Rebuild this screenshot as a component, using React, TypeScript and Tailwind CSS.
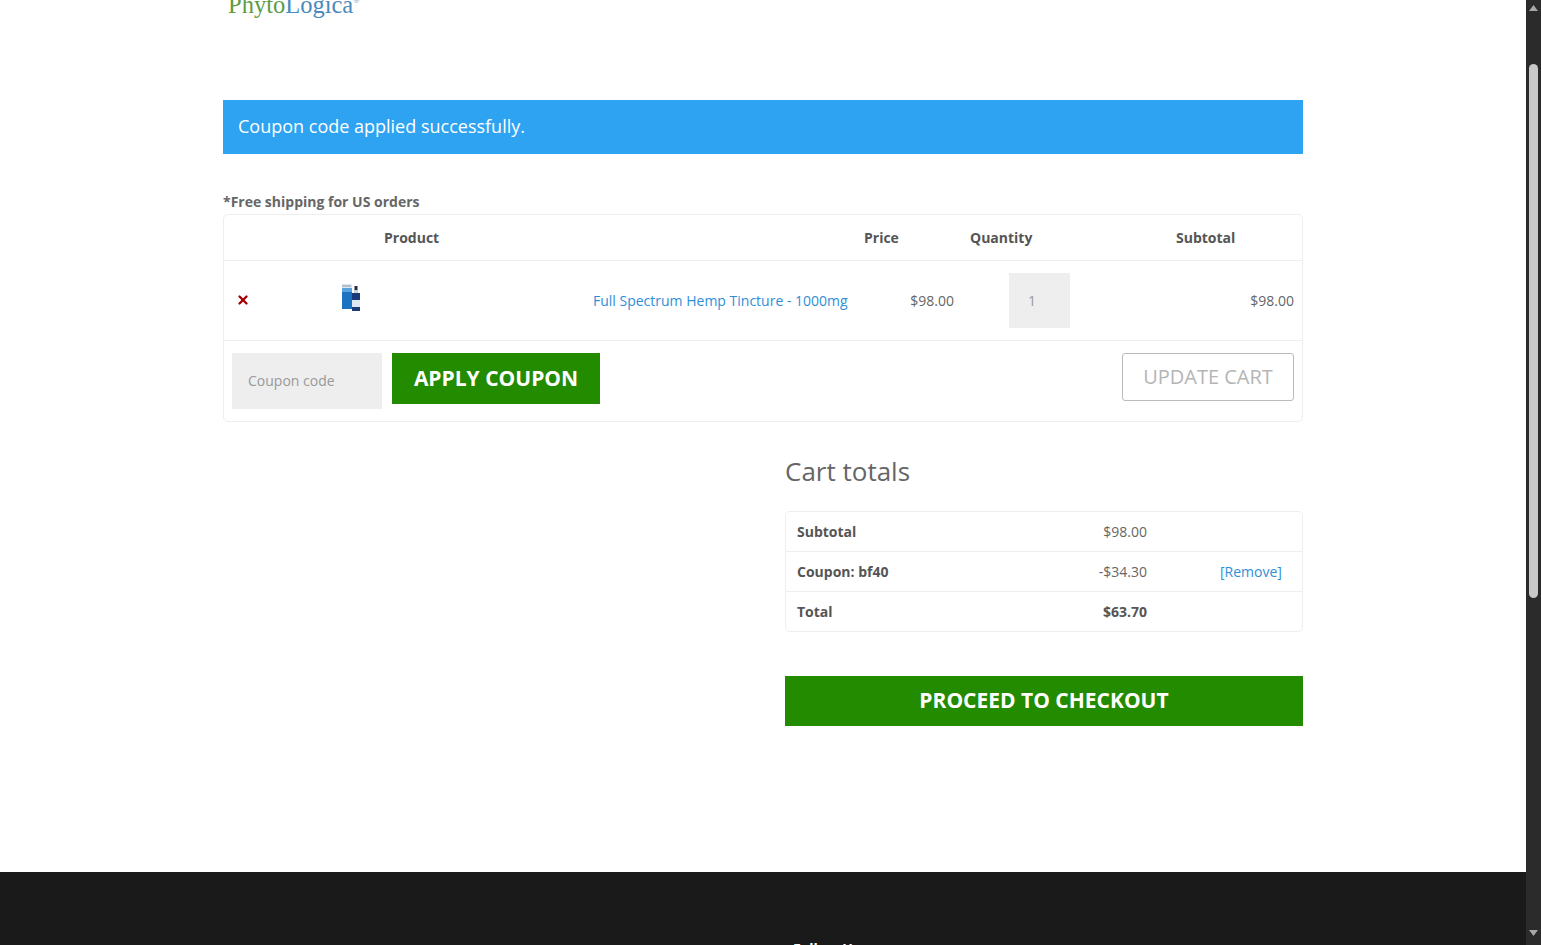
import { X } from "lucide-react";

function BottleIcon() {
  return (
    <svg width="20" height="30" viewBox="0 0 20 30" className="block">
      {/* carton */}
      <rect x="1" y="1" width="10" height="25" fill="#dfe8f0" />
      <rect x="1" y="2" width="9" height="2" fill="#aebfce" />
      <rect x="1" y="5" width="10" height="4" fill="#5aa2dc" />
      <rect x="1" y="9" width="10" height="17" fill="#1a72c0" />
      {/* bottle */}
      <rect x="13.5" y="3" width="3" height="4" fill="#222c44" />
      <rect x="13" y="7" width="4" height="3" fill="#c9d3e0" />
      <rect x="11" y="10" width="8" height="7" fill="#1c3a78" />
      <rect x="11" y="17" width="8" height="7" fill="#dce7f3" />
      <rect x="11" y="24" width="8" height="4" fill="#1c3a78" />
    </svg>
  );
}

function TotalsRow({ label, value, bold, action }: { label: string; value: string; bold?: boolean; action?: string }) {
  return (
    <div className="flex h-10 items-center border-b border-[#eeeeee] pl-[11px] text-sm last:h-[39px] last:border-b-0">
      <span className="w-[260px] font-bold text-[#555]">{label}</span>
      <span className={`w-[90px] text-right ${bold ? "font-bold text-[#555]" : "text-[#666]"}`}>{value}</span>
      {action ? <a className="ml-[73px] text-[#2e8fd8]">{action}</a> : null}
    </div>
  );
}

export default function App() {
  return (
    <div className="flex h-[945px] overflow-hidden bg-white font-['Open_Sans',sans-serif] text-sm text-[#666]">
      <div className="flex min-w-0 flex-1 flex-col">
        <main className="mx-auto h-[872px] w-[1080px] shrink-0">
          <div className="flex h-[19px] items-end overflow-hidden pb-px pl-[5px] font-['Liberation_Serif',serif] text-[24.5px] leading-[26px]">
            <span className="text-[#5c9c44]">Phyto</span>
            <span className="text-[#4a8abd]">Logica</span>
            <span className="mb-[13px] text-[8px] leading-none text-[#4a8abd]">®</span>
          </div>

          <div className="mt-[81px] flex h-[54px] items-center bg-[#2ea3f2] px-[15px] pb-[2px] text-lg text-white">
            Coupon code applied successfully.
          </div>

          <p className="mt-[37px] h-[23px] font-bold leading-[21px] text-[#666]">*Free shipping for US orders</p>

          <div className="rounded-[5px] border border-[#eeeeee]">
            <div className="flex h-[46px] items-center border-b border-[#eeeeee] font-bold text-[#555]">
              <span className="ml-[160px] w-[480px]">Product</span>
              <span className="w-[106px]">Price</span>
              <span className="w-[206px]">Quantity</span>
              <span>Subtotal</span>
            </div>

            <div className="flex h-[80px] items-center border-b border-[#eeeeee]">
              <X className="ml-[12px] -mt-px h-[14px] w-[14px] text-[#a80000]" strokeWidth={4} />
              <div className="-mt-[5px] ml-[91px]">
                <BottleIcon />
              </div>
              <a className="ml-[232px] w-[254px] whitespace-nowrap text-[#2e8fd8]">Full Spectrum Hemp Tincture - 1000mg</a>
              <span className="w-[107px] text-right">$98.00</span>
              <div className="ml-[55px] flex h-[55px] w-[61px] items-center bg-[#eeeeee] pl-[19px] text-[#999]">1</div>
              <span className="ml-auto pr-2">$98.00</span>
            </div>

            <div className="flex h-[80px] items-start px-2 pt-3">
              <div className="flex h-14 w-[150px] items-center bg-[#eeeeee] pl-4 text-[#999]">Coupon code</div>
              <button className="ml-[10px] h-[51px] w-[208px] bg-[#228b00] pb-[2px] text-[21px] font-bold text-white">APPLY COUPON</button>
              <button className="ml-auto h-12 w-[172px] rounded-[3px] border border-[#bbbbbb] text-xl text-[#b5b5b5]">UPDATE CART</button>
            </div>
          </div>

          <div className="ml-auto mt-[30px] w-[518px]">
            <h2 className="h-[40px] text-[26px] leading-[38px] text-[#666]">Cart totals</h2>
            <div className="mt-[19px] rounded-[5px] border border-[#eeeeee]">
              <TotalsRow label="Subtotal" value="$98.00" />
              <TotalsRow label="Coupon: bf40" value="-$34.30" action="[Remove]" />
              <TotalsRow label="Total" value="$63.70" bold />
            </div>
            <button className="mt-11 h-[50px] w-full bg-[#228b00] pb-[2px] text-[21px] font-bold text-white">PROCEED TO CHECKOUT</button>
          </div>
        </main>

        <footer className="h-[73px] shrink-0 overflow-hidden bg-[#1a1a1a]">
          <p className="mt-[67px] pl-[793px] text-sm font-bold leading-5 text-white">Follow Us</p>
        </footer>
      </div>

      <div className="flex w-[15px] shrink-0 flex-col items-center bg-[#2b2b2b]">
        <svg width="9" height="6" viewBox="0 0 9 6" className="mt-[5px]"><path d="M4.5 0 9 6H0z" fill="#a8a8a8" /></svg>
        <div className="mt-[53px] h-[534px] w-[9px] rounded-[5px] bg-[#c9c9c9]" />
        <svg width="9" height="6" viewBox="0 0 9 6" className="mt-[332px]"><path d="M0 0h9L4.5 6z" fill="#a8a8a8" /></svg>
      </div>
    </div>
  );
}
